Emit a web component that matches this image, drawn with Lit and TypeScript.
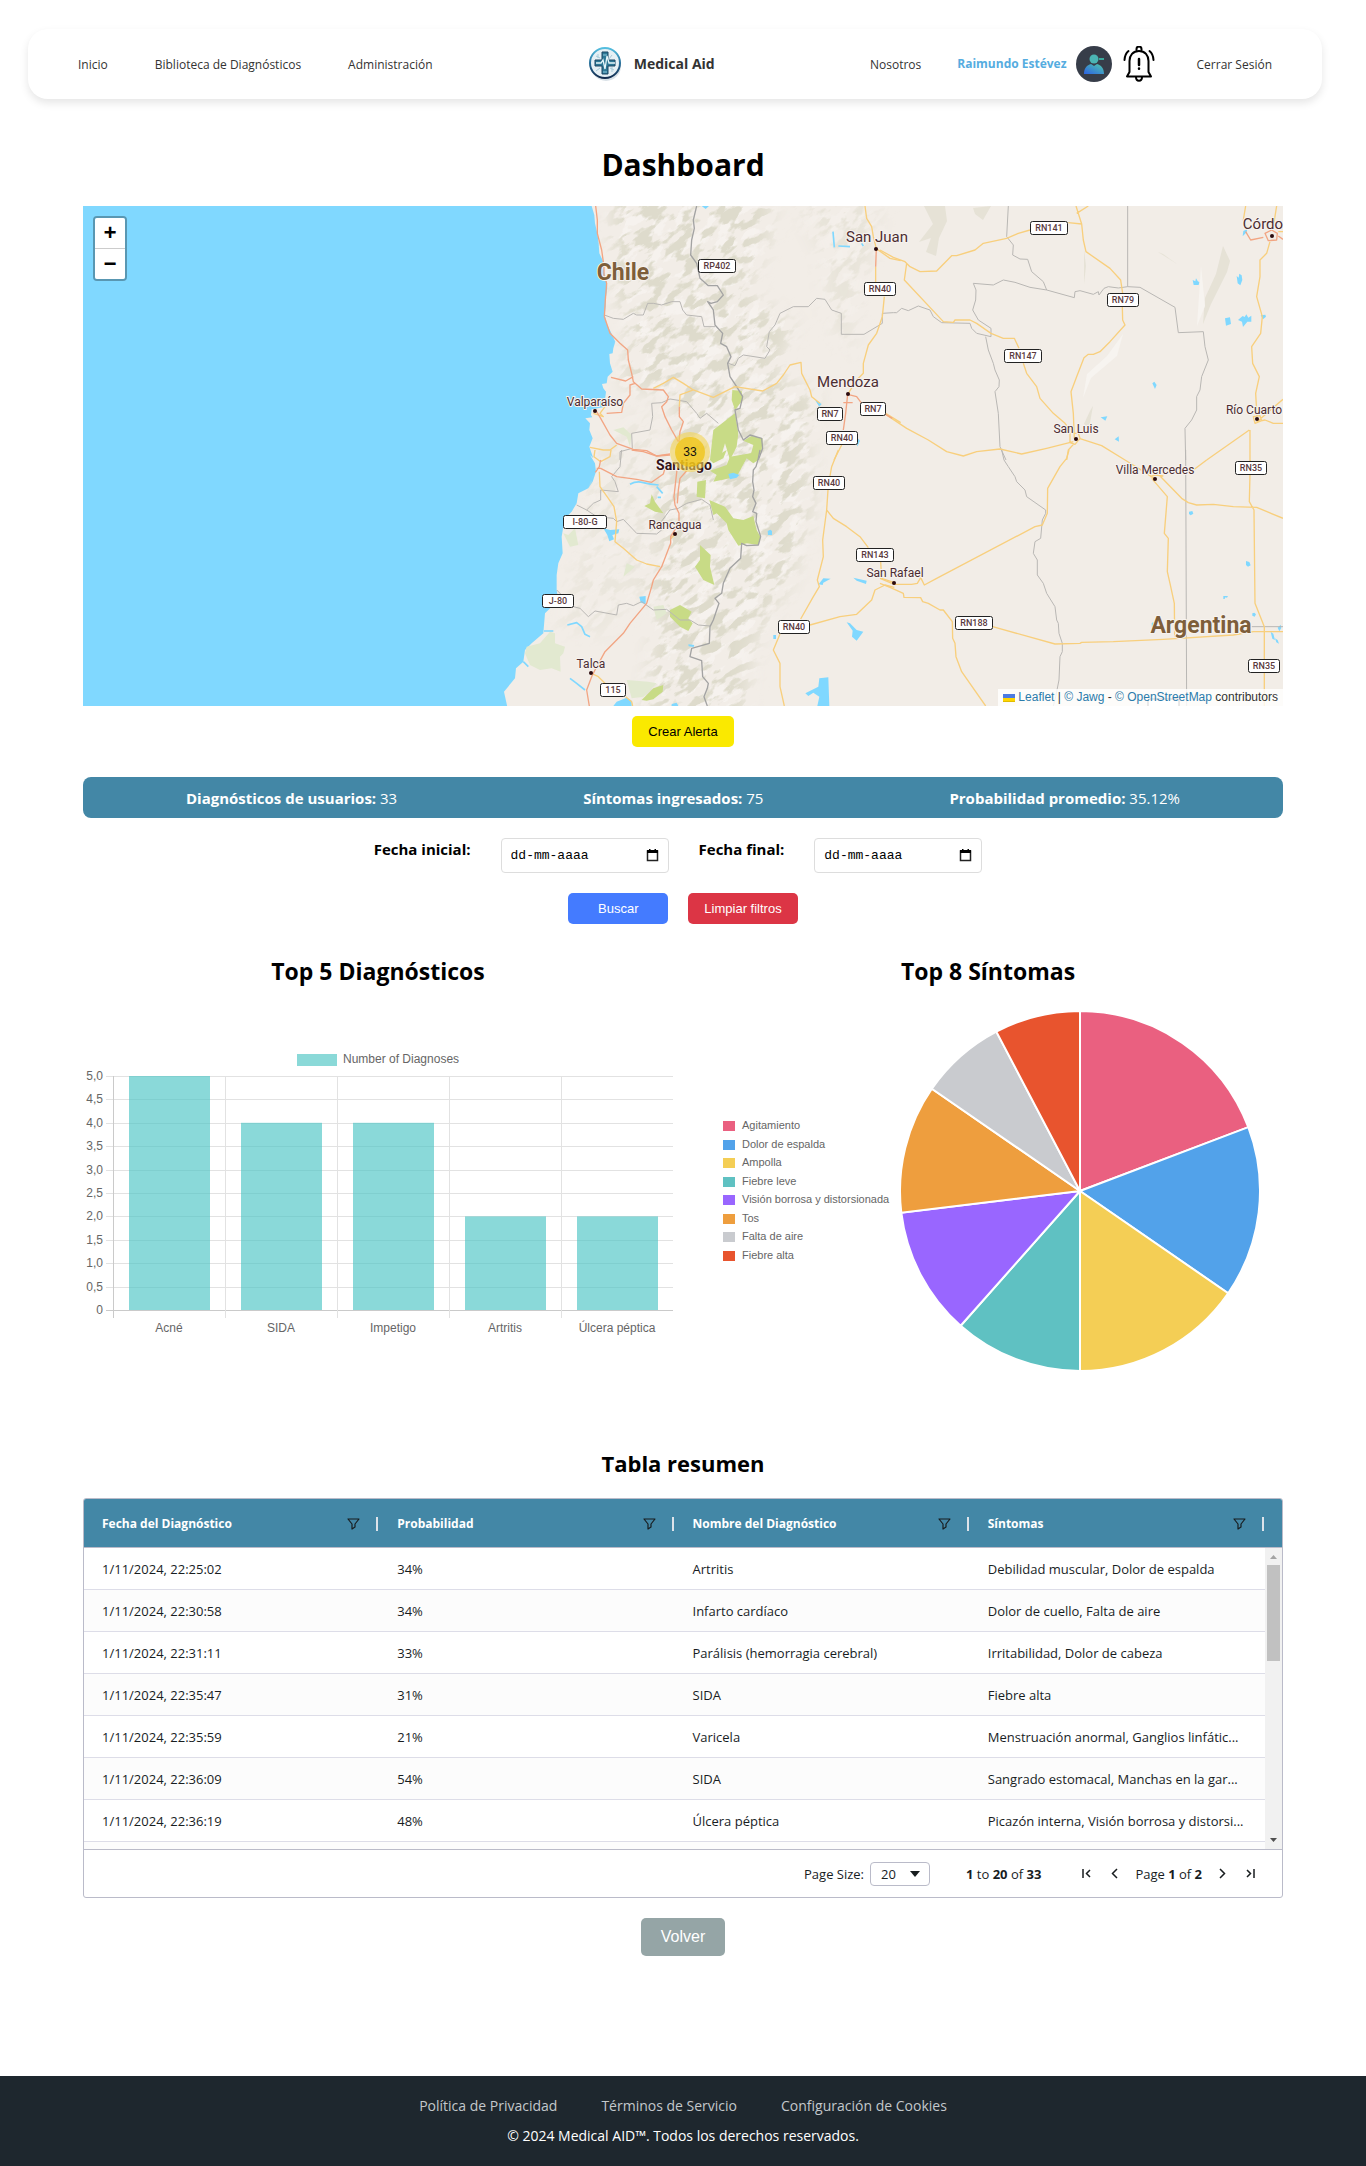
import { LitElement, html, svg, css } from "lit";
import { customElement, state } from "lit/decorators.js";

const sans = css`"Segoe UI", "Open Sans", "Noto Sans", sans-serif`;
const arial = css`"Liberation Sans", Arial, sans-serif`;

/* ---------- navigation ---------- */

@customElement("site-nav")
class SiteNav extends LitElement {
  static styles = css`
    :host { display: block; }
    .bar {
      display: flex; align-items: center; justify-content: space-between;
      box-sizing: border-box; height: 70px; margin: 29px 44px 0 28px; padding: 0 50px;
      border-radius: 20px; background: #fff; box-shadow: 0 4px 8px rgba(0, 0, 0, .1);
      font: 12px/20px ${sans}; color: #333;
    }
    .group { display: flex; align-items: center; gap: 47px; }
    .session { gap: 40px; }
    .bar a { padding-top: 2px; }
    a { color: inherit; text-decoration: none; }
    .bar .brand { display: flex; align-items: center; gap: 12px; padding: 0; font-size: 14px; font-weight: 700; }
    .account { display: flex; align-items: center; gap: 9px; margin-left: -4px; }
    .bar .user { display: flex; align-items: center; gap: 9px; padding: 0; color: #55ace0; font-weight: 700; }
    .bell { border: 0; padding: 0; background: none; display: flex; }
    svg { display: block; }
  `;
  render() {
    return html`
      <nav class="bar">
        <div class="group">
          <a href="#inicio">Inicio</a>
          <a href="#biblioteca">Biblioteca de Diagnósticos</a>
          <a href="#administracion">Administración</a>
        </div>
        <a class="brand" href="#inicio">
          <svg width="34" height="34" viewBox="0 0 34 34" aria-hidden="true">
            <defs>
              <linearGradient id="ring" x1="0" y1="0" x2="0" y2="1">
                <stop offset="0" stop-color="#55bfe0" /><stop offset=".5" stop-color="#28709b" /><stop offset="1" stop-color="#122b4d" />
              </linearGradient>
            </defs>
            <ellipse cx="18" cy="19" rx="15" ry="15" fill="#9fb4c4" opacity=".4" />
            <circle cx="17" cy="16" r="15" fill="#e6f0f5" stroke="url(#ring)" stroke-width="2" />
            <path d="M8 9l4 2M24 8l-3 4M8 24l4-3M26 23l-4-2M10 7v4M24 25v-5" stroke="#a7cbd9" />
            <path d="M14 5h6v8h7v6h-7v8h-6v-8H7v-6h7z" fill="#2e7896" stroke="#1b4563" />
            <path d="M8 16h5l2-3 2 9 2-13 2 7h6" fill="none" stroke="#e7f7fb" stroke-width="1.3" />
            <path d="M15 8h4M15 25h4" stroke="#8ecadd" />
          </svg>
          <span>Medical Aid</span>
        </a>
        <div class="group session">
          <a href="#nosotros">Nosotros</a>
          <div class="account">
            <a class="user" href="#perfil">
              <span>Raimundo Estévez</span>
              <svg width="36" height="36" viewBox="0 0 36 36" aria-hidden="true">
                <defs>
                  <linearGradient id="person" x1="1" y1="0" x2="0" y2="1">
                    <stop offset="0" stop-color="#4fc9ac" /><stop offset="1" stop-color="#2d62e4" />
                  </linearGradient>
                </defs>
                <circle cx="18" cy="18" r="18" fill="#373d49" />
                <circle cx="18" cy="13" r="4.500" fill="#4bb5b4" />
                <path d="M8 28c0-6 3-9 7-10l3 2 3-2c4 1 7 4 7 10z" fill="url(#person)" />
                <path d="M23 13h5" stroke="#3ba89c" stroke-width="2" />
              </svg>
            </a>
            <button class="bell" aria-label="Notificaciones">
              <svg width="36" height="36" viewBox="0 0 36 36" fill="none" stroke="#000" stroke-width="2" stroke-linecap="round" stroke-linejoin="round">
                <path d="M15.500 4V3a2.500 2.500 0 0 1 5 0v1" />
                <path d="M18 5c-6 0-9.500 4.500-9.500 10v11l-2.500 4.500h24L27.500 26V15c0-5.500-3.500-10-9.500-10z" />
                <path d="M15 31c0 5 6 5 6 0" />
                <path d="M3.500 14c.2-4 1.500-7 4-9M32.500 14c-.2-4-1.500-7-4-9" />
                <path d="M18 13v6M18 22.500v.2" stroke-width="2.500" />
              </svg>
            </button>
          </div>
          <a href="#salir">Cerrar Sesión</a>
        </div>
      </nav>`;
  }
}

/* ---------- map ---------- */

type Town = [name: string, x: number, y: number, size: number, dotX: number, dotY: number];
const towns: Town[] = [
  ["San Juan", 794, 36, 15, 793, 43],
  ["Mendoza", 765, 181, 15, 765, 188],
  ["Valparaíso", 512, 200, 12, 512, 205],
  ["Rancagua", 592, 323, 12, 592, 328],
  ["Talca", 508, 462, 12, 508, 467],
  ["San Rafael", 812, 371, 12, 811, 377],
  ["San Luis", 993, 227, 12, 993, 233],
  ["Villa Mercedes", 1072, 268, 12, 1072, 273],
  ["Río Cuarto", 1171, 208, 12, 1174, 213],
  ["Córdo", 1180, 23, 15, 1189, 30],
];

type Shield = [name: string, x: number, y: number, width: number];
const shields: Shield[] = [
  ["RP402", 634, 60, 37], ["RN40", 797, 83, 31], ["RN7", 747, 208, 25], ["RN7", 790, 203, 25],
  ["RN40", 759, 232, 31], ["RN40", 746, 277, 31], ["I-80-G", 502, 316, 43], ["J-80", 475, 395, 31],
  ["115", 530, 484, 25], ["RN143", 792, 349, 37], ["RN40", 711, 421, 31], ["RN141", 966, 22, 37],
  ["RN79", 1040, 94, 31], ["RN147", 940, 150, 37], ["RN35", 1168, 262, 31], ["RN188", 891, 417, 37],
  ["RN35", 1181, 460, 31],
];

interface Tile { x: number; y: number; park: string; scrub: string; lake: string; river: string; region: string; frontier: string; road: string; motorway: string; }
const tiles: Tile[] = [
  {
    x: 1191, y: -18,
    park: "M757 570 785 573 788 600 765 630 755 600zM765 640 700 690 690 780 720 780 735 730 750 780 770 740 775 700zM790 722 815 708 848 715 845 750 830 780 808 780 820 735z",
    scrub: "M400 690 430 682 455 705 450 740 440 710z",
    lake: "M665 18h22l-10 9zM1005 600 1025 612 1018 620zM1130 712l10 10-8 18z",
    river: "M1059 95 1063 142M1075 138 1110 140M1145 130l5 8",
    region: "M373 345 400 355 430 358 460 340 470 345 490 345 503 310 520 310 545 315 575 305 600 305 608 330 620 345 665 350 672 380 705 380M745 490 765 497 775 475 790 465 855 475 870 450 860 440 868 395 885 375 900 340 940 320 985 320 1010 295 1035 298 1055 330 1084 340V403H1152L1207 370V340L1240 338M715 670 680 640 660 655 650 640 620 605 570 597 545 608 515 610 518 650 510 690 455 700 457 745 420 755V780",
    frontier: "M650 18 640 60 643 85 635 120 632 165 650 190 660 235 685 257 712 257 730 285 712 305 693 310 683 305 700 330 705 375 728 400 722 430 740 440 753 470 743 490 750 530 770 560 788 590 780 625 765 630 775 690 790 720 810 705 845 715 848 745 835 780",
    road: "M520 565 550 550 580 532 610 550 640 570 700 592 765 560 848 573 890 550 910 525 930 495 963 487 965 520 990 570 995 590 1020 610M640 570 600 585 598 620M330 742 370 750 390 750 410 735M1155 18 1160 55 1175 80 1180 110 1189 146M1187 200V248M1213 290 1207 350 1190 400 1165 435 1150 490 1150 520 1130 540 1103 583M1085 735 1062 780M1189 146 1230 175 1262 182M1217 640 1262 668M340 640 370 650 360 640 375 620",
    motorway: "M347 18 352 60 352 100 365 150 372 200 372 225 380 250 376 300 373 350 390 400 420 430 443 450 445 480 455 520 460 545 485 567 550 570 565 590 560 605 545 620 555 650 575 690 595 725M393 532 437 543 460 530M465 550 450 555 450 585 430 610 425 637 380 640M350 635 362 655 390 705 410 730 460 748 500 752 530 768 570 765M598 620 598 650 610 665 600 695 597 725M1189 146 1187 200M1103 583 1097 640 1090 690M1090 608h28M1103 583 1130 590 1145 610",
  },
  {
    x: 1191, y: 732,
    park: "M690 62 740 45 750 20 820 8 820 0 840 0 835 30 820 40 800 25 770 80 700 95 710 75zM690 30 740 0 730 25 700 40zM652 95 678 90 675 145 650 140zM688 150 735 170 760 205 790 210 820 198 830 240 842 262 835 285 800 280 775 287 745 240 740 220 710 190 700 195zM660 285 692 315 690 350 703 405 670 390 645 350 660 330zM515 133 525 155 550 190 525 185 493 168 510 160zM570 480 600 465 635 485 625 505 638 520 625 543 600 530 570 500zM485 750 520 715 550 705 548 725 520 748 500 752z",
    scrub: "M140 590 180 580 210 545 225 550 225 580 255 590 250 610 240 620 242 665 215 655 180 660 150 645 135 610zM440 690 505 695 530 700 490 740 455 745zM250 250 265 255 285 235 295 285 270 290zM520 470 550 465 560 490 530 510zM430 380 440 340 465 350z",
    lake: "M370 235 390 240 418 238 415 250 397 255 402 268 388 274 382 255zM478 440 497 438 497 462 482 458zM745 72 760 68 778 75 770 83 750 88zM863 243l8-4 5 4v12h-12zM1016 403 1030 385 1052 386 1030 398 1028 405zM1120 383 1160 392 1158 402 1130 392zM1100 517 1110 520 1130 540 1150 545 1130 572 1116 560 1118 542zM1018 685 1045 682 1048 768 1012 768 1018 740 1000 728 985 738 976 730 1015 710zM410 755 440 743 455 752 455 768 400 768zM880 555h8v12h-8zM625 583l18 2-2 6-15-2zM575 762l15-4 5 10h-20z",
    river: "M450 103Q470 92 490 98T536 105M530 110 548 130M533 142h10M262 525 290 518 305 530 315 553 330 560M270 685 290 700 315 720M130 635l15 15M192 543h28",
    region: "M425 0 420 50 395 80 405 95 415 125 362 120V150L340 160 320 180 290 165M320 180 350 200 400 205 410 215 430 208 470 250 530 252 545 240 540 220 570 180 595 175 620 160 665 148 690 165 700 210M230 420 250 440 280 470 300 475 325 500 345 483 410 495 415 465 440 460 460 467 485 455 520 480 560 478 600 510 630 510 655 525 690 528",
    frontier: "M840 0 835 25 828 50 820 60 818 95 822 120 818 140 828 160 818 185 830 190 828 215 842 260 835 285 800 287 785 280 782 325 750 355 730 400 725 430 705 445 717 460 700 510 690 530 688 580 635 595 630 620 665 632 668 680 685 700 682 715 672 740 682 768",
    road: "M345 0 342 20 362 35 390 20 393 0M358 65 360 110 385 145 402 170 410 215 405 275 430 295 470 330 500 342 540 350M332 669 355 680 375 700M437 740 455 755 458 768M1075 0 1055 50 1050 78M1044 120 1040 180 1028 270 1030 320 1012 390 1018 410 1000 440 962 507M900 552 880 600 900 640 900 710 913 768M1040 180 1060 205 1100 230 1140 260 1165 293M990 525 1080 500 1130 493 1175 450 1185 420 1215 405 1243 412M1202 335 1205 385 1243 398M586 252l-15 15",
    motorway: "M592 50 582 140 585 165 597 190 597 220 572 260 572 280 545 350 520 390 515 410 500 460 450 520 430 550 375 605 345 660 335 680 320 720 328 768M622 60 600 85 595 120 592 160M350 55 362 55 410 80 470 88 515 97 550 72 555 55M455 0 490 5 530 18 570 12M362 30 358 50 346 67",
  },
  {
    x: 2391, y: -18,
    park: "", scrub: "",
    lake: "M938 240l8 4 2-9 5 8 5 4-2 8h-15zM1070 228l6 5 2-12 7 5 2 14-6 16-8-6zM1035 355l15-3 3 20-15 5zM1074 360l14-12 6 3 5-8 6 10 9-6v18h-12l-13 16-3-16zM1142 346l14-2 2 6-9 8zM817 550l6-5 7 10-5 12zM662 652l20-3-6 13zM704 718l12-9 1 16zM1090 93l12-6-2 10-12 12z",
    river: "",
    region: "M40 338H50L65 325 85 332 115 318 135 325 150 330 160 350 185 368 270 370 275 385 290 400 333 410M280 250 340 255 370 240 405 247 450 262 500 270 583 293 585 275 600 272 640 283 655 275 657 285 672 265 685 260 715 264 743 260 780 262 885 322 895 398 970 395 975 440 985 480 965 530 960 570 950 590 950 630 935 660 915 685 917 780M743 18V260M385 18 380 110 400 135 398 165 420 177 443 178 455 215 490 245 500 270M280 250 288 270 287 300 278 330 295 360 333 385V410M317 410 325 450 340 490 345 510 358 540 357 560 345 575 355 640 360 740 378 780",
    frontier: "",
    road: "M0 150 40 172 75 185 90 200 120 215 170 213 215 167 230 167 285 150 310 130 380 115 415 100 450 90M565 68 605 72M588 18 605 72 610 120 618 155 690 205 722 240 728 280M727 320 728 360 735 375 690 425 660 455 640 463 625 463 612 473 590 530 573 575 580 640 583 716M590 40 625 18M80 190 73 240 190 365 220 367 225 360 270 360 290 370 333 400 370 415 403 415 417 445M430 490 440 520 470 560 480 595 520 640 555 670 570 690M17 643 80 685 145 720 200 755 250 768 290 755 360 747 425 762 500 745 580 725M600 716 665 737 735 780M583 730 565 750 560 780M570 700h25l5 15-15 18-15-5zM1097 18 1090 60 1100 85M1190 18 1180 80M1195 95h15M1170 125 1160 160 1140 180 1140 230 1130 290 1147 350 1142 400 1115 440 1118 490 1138 530 1127 580 1131 650M1209 598 1131 665 1155 660 1180 670 1209 670M1120 650l20-3 5 15-20 8zM1108 690 980 780M1110 690V784",
    motorway: "M1097 95 1112 120 1150 112M1155 100 1175 90 1192 100 1190 120 1165 122zM1195 108 1209 118M17 643l20 12",
  },
  {
    x: 2391, y: 732,
    park: "", scrub: "",
    lake: "M927 185l10-2 3 8-8 5-5-4zM1098 333l10 3 4 10-8 4-6-5zM1030 438h14l-3 5-5-1-2 5h-4zM1117 490l6-2 5 5-4 7-7-3zM1172 545l8 6 5 19-8-4zM1193 533l9-9 2 10-6 10zM1185 565l8 5 4 11-8-4zM815 520l6-5-4 38z",
    river: "",
    region: "M365 0 372 30 385 50 405 80 410 95 435 120 440 140 497 180V190L487 210 482 265 465 275 460 310 472 330V375L490 400 500 430 525 470 530 510 535 520 537 550 547 580V605L540 620 537 690 527 740 520 768M917 0 920 768M1115 530H1209",
    frontier: "",
    road: "M567 0 560 25 540 50 503 115 502 190 487 225 465 230 170 385 133 405 122 383 112 400 95 403 43 403 0 385M0 400 30 412 70 430 72 442 122 443 128 455 145 460 180 480 190 480 217 515 218 565 225 580 228 620 245 665 317 768M338 530 525 582 600 580 605 577 700 575 850 568 1060 555 1120 545 1209 545M735 30 800 70 826 88M810 80l15-5 25 3M840 78 905 145 925 158 950 165 1000 163 1060 170 1130 172 1209 205M815 85 862 140 853 250 865 265 862 365 870 400 883 460 884 560M980 30 940 60M1111 30V34M1110 74 1108 155 1122 180 1125 460 1153 530 1153 768",
    motorway: "",
  },
];

@customElement("diagnosis-map")
class DiagnosisMap extends LitElement {
  static styles = css`
    :host { display: block; }
    .map { position: relative; height: 500px; overflow: hidden; background: #80d8ff; }
    .canvas { display: block; width: 100%; height: 100%; }
    .label { font-family: Roboto, sans-serif; text-anchor: middle; paint-order: stroke; stroke: #f7f3ef; stroke-width: 2px; stroke-linejoin: round; fill: #4c2d32; }
    .s12 { font-size: 12px; }
    .s15 { font-size: 15px; }
    .country { font-size: 23px; font-weight: 700; fill: #7e5e3a; }
    .capital { font-size: 14px; font-weight: 700; fill: #351318; }
    .shield { font: 500 9px Roboto, sans-serif; text-anchor: middle; fill: #5a393d; }
    .count { font: 12px ${arial}; text-anchor: middle; fill: #111; }
    .zoom { position: absolute; top: 10px; left: 10px; border: 2px solid rgba(0, 0, 0, .3); border-radius: 4px; overflow: hidden; }
    .zoom button { display: block; box-sizing: border-box; width: 30px; height: 30px; padding: 3px 0 0; border: 0; background: #fff; font: 700 22px/27px "Liberation Mono", monospace; color: #000; }
    .zoom button:first-child { height: 31px; border-bottom: 1px solid #ccc; }
    .credit { position: absolute; right: 0; bottom: 0; padding: 0 5px; background: rgba(255, 255, 255, .8); font: 12px/17px ${arial}; color: #333; white-space: nowrap; }
    .credit a { color: #2b7bab; text-decoration: none; }
    .flag { vertical-align: -1px; }
  `;
  render() {
    return html`
      <div class="map">
        <svg class="canvas" viewBox="0 0 1200 500" preserveAspectRatio="xMidYMid slice" role="img" aria-label="Mapa de diagnósticos">
          <defs>
            <filter id="relief" x="0" y="0" width="1" height="1" color-interpolation-filters="sRGB">
              <feTurbulence type="fractalNoise" baseFrequency=".05 .11" numOctaves="4" seed="7" />
              <feColorMatrix values="0 0 0 0 .87  0 0 0 0 .86  0 0 0 0 .80  9 0 0 0 -4.500" />
            </filter>
            <filter id="glow" x="0" y="0" width="1" height="1" color-interpolation-filters="sRGB">
              <feTurbulence type="fractalNoise" baseFrequency=".05 .1" numOctaves="4" seed="21" />
              <feColorMatrix values="0 0 0 0 .965  0 0 0 0 .95  0 0 0 0 .935  10 0 0 0 -5.100" />
            </filter>
            <filter id="soft"><feGaussianBlur stdDeviation="9" /></filter>
            <mask id="andes" maskUnits="userSpaceOnUse" x="0" y="0" width="1200" height="500">
              <g filter="url(#soft)" fill="#fff">
                <path d="M528-20H690L685 40 662 85 712 120 690 170 735 190 725 240 730 290 720 340 705 380 685 410 670 440 660 520H560L575 400 560 380 580 350 565 290 595 260 590 190 540 180 545 130 530 80z" />
                <path d="M500 260 560 200 590 260 570 370 520 430 470 420 500 340z" opacity=".35" />
                <path d="M705-20H800L790 40 770 120 768 150 745 110 740 50z" opacity=".5" />
              </g>
            </mask>
            <clipPath id="land">
              <path d="M508 0 512 10 514 37 520 56 525 81 522 109 531 134 528 160 524 178 522 196 505 212 509 238 512 262 505 283 490 305 480 330 475 365 470 395 460 428 445 450 425 490 425 500H1200V0z" />
            </clipPath>
          </defs>
          <g transform="scale(.33333)">
            <path transform="translate(1191 -18)" fill="#f2ede7" d="M335 18 343 45 345 70 352 100 356 130 358 160 370 185 372 215 380 240 382 265 378 290 377 320 374 345 382 375 392 395 406 425 400 445 398 460 388 462 390 490 398 515 383 530 380 550 366 552 370 565 378 575 375 600 368 605 370 622 335 628 333 645 337 652 316 655 330 670 328 690 338 715 328 740 340 775 330 765 345 790 348 815 338 845 325 865 295 880 290 910 275 935 255 955 250 980 245 1010 248 1060 235 1090 230 1125 230 1170 235 1200 205 1230 195 1240 190 1300 155 1330 135 1350 130 1385 108 1405 105 1435 72 1475 84 1530H2500V0z" />
          </g>
          <g clip-path="url(#land)">
            <g mask="url(#andes)">
              <rect x="100" y="-400" width="1100" height="1400" transform="rotate(-38 620 250)" filter="url(#glow)" />
              <rect x="100" y="-400" width="1100" height="1400" transform="rotate(-38 620 250)" filter="url(#relief)" />
            </g>
          </g>
          <path fill="#dedccd" opacity=".65" d="M841 0H862L864 15 856 32 853 50 843 46 848 32 836 36 850 18zM890 2 908 0 900 14 892 8zM1140 40 1147 55 1144 66 1128 98 1120 118 1122 92 1133 68zM1007 205 1010 200 1006 222 1001 218zM1001 44V78L1003 60zM1075 46 1094 58 1080 48z" />
          <path fill="#f7f4f0" d="M1040 128 1034 150 1008 172 1000 192 1004 168 1024 150zM1118 60 1122 100 1114 120z" />
          <g transform="scale(.33333)" fill="none" stroke-linejoin="round">
            ${tiles.map((t) => svg`
              <g transform="translate(${t.x} ${t.y})">
                <path d="${t.scrub}" fill="#e2e9d0" />
                <path d="${t.park}" fill="#c8db86" />
                <path d="${t.lake}" fill="#80d8ff" />
                <path d="${t.river}" stroke="#80d8ff" stroke-width="5" />
                <path d="${t.region}" stroke="#b9b7b4" stroke-width="3" />
                <path d="${t.frontier}" stroke="#a3a3a3" stroke-width="4" />
                <path d="${t.road}" stroke="#f8cf7d" stroke-width="4" />
                <path d="${t.motorway}" stroke="#f2a583" stroke-width="4" />
              </g>`)}
          </g>
          <rect x="1065" y="493" width="31" height="13" rx="2" fill="#fff" stroke="#222" />
          ${shields.map(([name, x, y, w]) => svg`
            <rect x=${x - w / 2} y=${y - 6.5} width=${w} height="13" rx="2" fill="#fff" stroke="#222" />
            <text class="shield" x=${x} y=${y + 3}>${name}</text>`)}
          ${towns.map(([name, x, y, size, dx, dy]) => svg`
            <circle cx=${dx} cy=${dy} r="2" fill="#2b0a0d" />
            <text class="label s${size}" x=${x} y=${y}>${name}</text>`)}
          <text class="label country" x="540" y="74">Chile</text>
          <text class="label country" x="1118" y="427">Argentina</text>
          <text class="label capital" x="601" y="264">Santiago</text>
          <circle cx="607" cy="246" r="20" fill="rgba(241,211,87,.6)" />
          <circle cx="607" cy="246" r="15" fill="rgba(240,194,12,.7)" />
          <text class="count" x="607" y="250">33</text>
        </svg>
        <div class="zoom">
          <button aria-label="Acercar">+</button>
          <button aria-label="Alejar">−</button>
        </div>
        <div class="credit">
          <a href="#leaflet"><svg class="flag" width="12" height="8" viewBox="0 0 12 8" aria-hidden="true"><path fill="#4c7be1" d="M0 0h12v4H0z" /><path fill="#ffd500" d="M0 4h12v3H0z" /><path fill="#e0bc00" d="M0 7h12v1H0z" /></svg> Leaflet</a> | <a href="#jawg">© Jawg</a> - <a href="#osm">© OpenStreetMap</a> contributors
        </div>
      </div>`;
  }
}

/* ---------- charts ---------- */

@customElement("bar-chart")
class BarChart extends LitElement {
  static styles = css`
    :host { display: block; }
    svg { display: block; width: 100%; }
    text { font: 12px ${arial}; fill: #666; }
    .end { text-anchor: end; }
    .mid { text-anchor: middle; }
  `;
  private bars: [string, number][] = [["Acné", 5], ["SIDA", 4], ["Impetigo", 4], ["Artritis", 2], ["Úlcera péptica", 2]];
  render() {
    const left = 30, right = 590, top = 32, bottom = 266;
    const step = (right - left) / this.bars.length;
    const unit = (bottom - top) / 5;
    const ticks = Array.from({ length: 11 }, (_, i) => i / 2);
    return html`
      <svg viewBox="0 0 590 295" role="img" aria-label="Top 5 Diagnósticos">
        <rect x="214" y="10" width="40" height="12" fill="#8ad9d8" />
        <text x="260" y="19">Number of Diagnoses</text>
        ${ticks.map((v) => {
          const y = Math.round(bottom - v * unit) + 0.5;
          return svg`
            <path d="M23 ${y}H${right}" stroke=${v ? "#e2e2e2" : "#cacaca"} />
            <text class="end" x="20" y=${y + 3}>${v ? v.toFixed(1).replace(".", ",") : "0"}</text>`;
        })}
        ${this.bars.map(([name, v], i) => svg`
          <path d="M${left + i * step + 0.5} ${top}V${bottom + 8}" stroke=${i ? "#e2e2e2" : "#cacaca"} />
          <rect x=${left + i * step + 16} y=${bottom - v * unit} width="81" height=${v * unit} fill="rgba(75,197,196,.65)" />
          <text class="mid" x=${left + (i + 0.5) * step} y="288">${name}</text>`)}
      </svg>`;
  }
}

@customElement("pie-chart")
class PieChart extends LitElement {
  static styles = css`
    :host { display: block; }
    svg { display: block; width: 100%; }
    text { font: 11px ${arial}; fill: #666; }
  `;
  private slices: [string, number, string][] = [
    ["Agitamiento", 5, "#ea6080"], ["Dolor de espalda", 4, "#52a2ea"], ["Ampolla", 4, "#f4ce55"], ["Fiebre leve", 3, "#5fc1c2"],
    ["Visión borrosa y distorsionada", 3, "#9966ff"], ["Tos", 3, "#ee9e3e"], ["Falta de aire", 2, "#c9cbcf"], ["Fiebre alta", 2, "#e8542e"],
  ];
  render() {
    const total = this.slices.reduce((sum, s) => sum + s[1], 0);
    const cx = 387, cy = 180, r = 180;
    const at = (n: number) => {
      const a = (n / total) * Math.PI * 2;
      return `${(cx + r * Math.sin(a)).toFixed(2)} ${(cy - r * Math.cos(a)).toFixed(2)}`;
    };
    let sum = 0;
    return html`
      <svg viewBox="0 0 590 360" role="img" aria-label="Top 8 Síntomas">
        ${this.slices.map(([name, value, color], i) => {
          const start = sum;
          sum += value;
          return svg`
            <path d="M${cx} ${cy}L${at(start)}A${r} ${r} 0 0 1 ${at(sum)}z" fill=${color} stroke="#fff" stroke-width="2" />
            <rect x="30" y=${110 + Math.round(i * 18.55)} width="12" height="10" fill=${color} />
            <text x="49" y=${118 + Math.round(i * 18.55)}>${name}</text>`;
        })}
      </svg>`;
  }
}

/* ---------- summary table ---------- */

@customElement("summary-grid")
class SummaryGrid extends LitElement {
  static styles = css`
    :host { display: block; }
    .wrap { box-sizing: border-box; height: 400px; display: flex; flex-direction: column; border: 1px solid #babbc9; border-radius: 3px; overflow: hidden; font: 13px/20px ${sans}; color: #181d1f; }
    .view { position: relative; flex: 1; min-height: 0; overflow: hidden; }
    table, thead, tbody { display: block; }
    tr { display: grid; grid-template-columns: repeat(4, 1fr); padding-right: 17px; border-bottom: 1px solid #dddde8; box-sizing: border-box; height: 42px; align-items: center; }
    th, td { padding: 1px 17px 0 18px; text-align: left; min-width: 0; white-space: nowrap; overflow: hidden; text-overflow: ellipsis; }
    thead tr { height: 49px; background: #4387a6; border-color: #babbc9; color: #fff; }
    th { display: flex; align-items: center; font-size: 12px; font-weight: 700; padding-right: 1px; }
    th span { flex: 1; }
    .filter { display: flex; border: 0; padding: 0; margin-right: 16px; background: none; }
    th::after { content: ""; width: 2px; height: 14px; background: #dde3ea; }
    tbody tr:nth-child(even) { background: #fcfcfc; }
    .scroll { position: absolute; right: 0; top: 49px; bottom: 0; width: 17px; display: flex; flex-direction: column; align-items: center; background: #f1f1f1; }
    .arrow { height: 17px; width: 17px; display: block; }
    .thumb { width: 13px; height: 96px; background: #c1c1c1; margin-bottom: auto; }
    .paging { display: flex; align-items: center; justify-content: flex-end; height: 47px; padding-right: 22px; border-top: 1px solid #babbc9; }
    select { appearance: none; box-sizing: border-box; width: 60px; height: 24px; margin-left: 6px; padding: 0 10px; border: 1px solid #babbc9; border-radius: 4px; background: #fff; font: 13px ${sans}; color: #181d1f; }
    .size { position: relative; display: flex; align-items: center; }
    .caret { position: absolute; right: 10px; top: 9px; border: 5px solid transparent; border-top: 6px solid #181d1f; border-bottom: 0; pointer-events: none; }
    .rows { margin: 0 36px; }
    .pages { display: flex; align-items: center; gap: 11px; }
    .pages button { display: flex; border: 0; padding: 0; background: none; }
  `;
  private heads = ["Fecha del Diagnóstico", "Probabilidad", "Nombre del Diagnóstico", "Síntomas"];
  private data = [
    ["1/11/2024, 22:25:02", "34%", "Artritis", "Debilidad muscular, Dolor de espalda"],
    ["1/11/2024, 22:30:58", "34%", "Infarto cardíaco", "Dolor de cuello, Falta de aire"],
    ["1/11/2024, 22:31:11", "33%", "Parálisis (hemorragia cerebral)", "Irritabilidad, Dolor de cabeza"],
    ["1/11/2024, 22:35:47", "31%", "SIDA", "Fiebre alta"],
    ["1/11/2024, 22:35:59", "21%", "Varicela", "Menstruación anormal, Ganglios linfátic..."],
    ["1/11/2024, 22:36:09", "54%", "SIDA", "Sangrado estomacal, Manchas en la gar..."],
    ["1/11/2024, 22:36:19", "48%", "Úlcera péptica", "Picazón interna, Visión borrosa y distorsi..."],
    ["", "", "", ""],
  ];
  private icon(d: string) {
    return html`<svg width="18" height="16" viewBox="0 0 18 16" fill="none" stroke="#181d1f" stroke-width="1.5" aria-hidden="true"><path d=${d} /></svg>`;
  }
  render() {
    return html`
      <div class="wrap">
        <div class="view">
          <table>
            <thead>
              <tr>${this.heads.map((h) => html`
                <th scope="col"><span>${h}</span>
                  <button class="filter" aria-label="Filtrar ${h}">
                    <svg width="13" height="12" viewBox="0 0 13 12" fill="none" stroke="#181d1f" stroke-width="1.2" stroke-linejoin="round"><path d="M1 1h11L8 6v3l-3 2V6z" /></svg>
                  </button>
                </th>`)}
              </tr>
            </thead>
            <tbody>${this.data.map((row) => html`<tr>${row.map((c) => html`<td>${c}</td>`)}</tr>`)}</tbody>
          </table>
          <div class="scroll" aria-hidden="true">
            <svg class="arrow" viewBox="0 0 17 17"><path d="M5 11h7L8.500 7z" fill="#a3a3a3" /></svg>
            <div class="thumb"></div>
            <svg class="arrow" viewBox="0 0 17 17"><path d="M5 6h7l-3.500 4z" fill="#505050" /></svg>
          </div>
        </div>
        <div class="paging">
          <div class="size">
            <label for="size">Page Size:</label>
            <select id="size"><option>20</option><option>50</option><option>100</option></select>
            <span class="caret"></span>
          </div>
          <div class="rows"><b>1</b> to <b>20</b> of <b>33</b></div>
          <div class="pages">
            <button aria-label="Primera página">${this.icon("M6 3v9M13 4 9.500 7.500 13 11")}</button>
            <button aria-label="Página anterior">${this.icon("M11 3 6.500 7.500 11 12")}</button>
            <span>Page <b>1</b> of <b>2</b></span>
            <button aria-label="Página siguiente">${this.icon("M7 3l4.500 4.500L7 12")}</button>
            <button aria-label="Última página">${this.icon("M5 4l3.500 3.500L5 11M12 3v9")}</button>
          </div>
        </div>
      </div>`;
  }
}

/* ---------- page ---------- */

@customElement("app-root")
class AppRoot extends LitElement {
  static styles = css`
    :host { display: flex; flex-direction: column; min-height: 100vh; background: #fff; font: 15px/22px ${sans}; color: #000; }
    main { box-sizing: border-box; width: min(1200px, 100% - 48px); margin: 44px auto 120px; }
    h1 { margin: 0 0 19px; font-size: 30px; line-height: 44px; text-align: center; }
    h2 { margin: 0; font-size: 23px; line-height: 32px; text-align: center; }
    button { border: 0; border-radius: 5px; padding: 0 16px; height: 31px; font: 13px ${arial}; color: #fff; }
    .center { display: flex; justify-content: center; gap: 20px; }
    .alert { margin-top: 10px; background: #fae900; color: #000; }
    .search { width: 100px; background: #447bff; }
    .clear { background: #dc3545; }
    .back { height: 38px; margin-top: 20px; padding: 0 20px; background: #95a5a6; font-size: 16px; }
    .stats { display: flex; justify-content: space-around; align-items: center; height: 41px; margin: 30px 0 20px; padding: 0 10px; border-radius: 8px; background: #4387a6; color: #fff; }
    .dates { display: flex; justify-content: center; gap: 30px; margin-bottom: 20px; padding-right: 10px; }
    .dates label { font-weight: 700; }
    .date { position: relative; display: flex; }
    .date input { box-sizing: border-box; width: 168px; height: 35px; padding: 0 9px; border: 1px solid #ddd; border-radius: 4px; font: 13px "Liberation Mono", monospace; }
    .date input::placeholder { color: #000; opacity: 1; }
    .date svg { position: absolute; right: 10px; top: 10px; pointer-events: none; }
    .charts { display: grid; grid-template-columns: 1fr 1fr; column-gap: 20px; row-gap: 24px; align-items: center; margin: 31px 0 76px; }
    .summary { margin-bottom: 19px; font-size: 22px; }
    footer { display: flex; flex-direction: column; align-items: center; justify-content: center; gap: 8px; height: 90px; margin-top: auto; background: #1e272e; font-size: 14px; color: #fff; }
    .links { display: flex; gap: 44px; }
    .links a { color: #c3c8cc; text-decoration: none; }
  `;
  @state() private start = "";
  @state() private end = "";

  private dateField(id: string, value: string, set: (v: string) => void) {
    return html`
      <div class="date">
        <input id=${id} placeholder="dd-mm-aaaa" .value=${value} @input=${(e: Event) => set((e.target as HTMLInputElement).value)} />
        <svg width="13" height="14" viewBox="0 0 13 14" aria-hidden="true"><path d="M1.500 3h10v9.500h-10z" fill="none" stroke="#222" stroke-width="1.500" /><path d="M1 2h11v3H1zM3 1h1.500v2H3zM8.500 1H10v2H8.500z" fill="#000" /></svg>
      </div>`;
  }

  render() {
    return html`
      <site-nav></site-nav>
      <main>
        <h1>Dashboard</h1>
        <diagnosis-map></diagnosis-map>
        <div class="center"><button class="alert">Crear Alerta</button></div>
        <div class="stats">
          <span><b>Diagnósticos de usuarios:</b> 33</span>
          <span><b>Síntomas ingresados:</b> 75</span>
          <span><b>Probabilidad promedio:</b> 35.12%</span>
        </div>
        <div class="dates">
          <label for="start">Fecha inicial:</label>
          ${this.dateField("start", this.start, (v) => (this.start = v))}
          <label for="end">Fecha final:</label>
          ${this.dateField("end", this.end, (v) => (this.end = v))}
        </div>
        <div class="center">
          <button class="search">Buscar</button>
          <button class="clear" @click=${() => { this.start = ""; this.end = ""; }}>Limpiar filtros</button>
        </div>
        <section class="charts">
          <h2>Top 5 Diagnósticos</h2>
          <h2>Top 8 Síntomas</h2>
          <bar-chart></bar-chart>
          <pie-chart></pie-chart>
        </section>
        <h2 class="summary">Tabla resumen</h2>
        <summary-grid></summary-grid>
        <div class="center"><button class="back">Volver</button></div>
      </main>
      <footer>
        <div class="links">
          <a href="#privacidad">Política de Privacidad</a>
          <a href="#terminos">Términos de Servicio</a>
          <a href="#cookies">Configuración de Cookies</a>
        </div>
        <div>© 2024 Medical AID™. Todos los derechos reservados.</div>
      </footer>`;
  }
}
